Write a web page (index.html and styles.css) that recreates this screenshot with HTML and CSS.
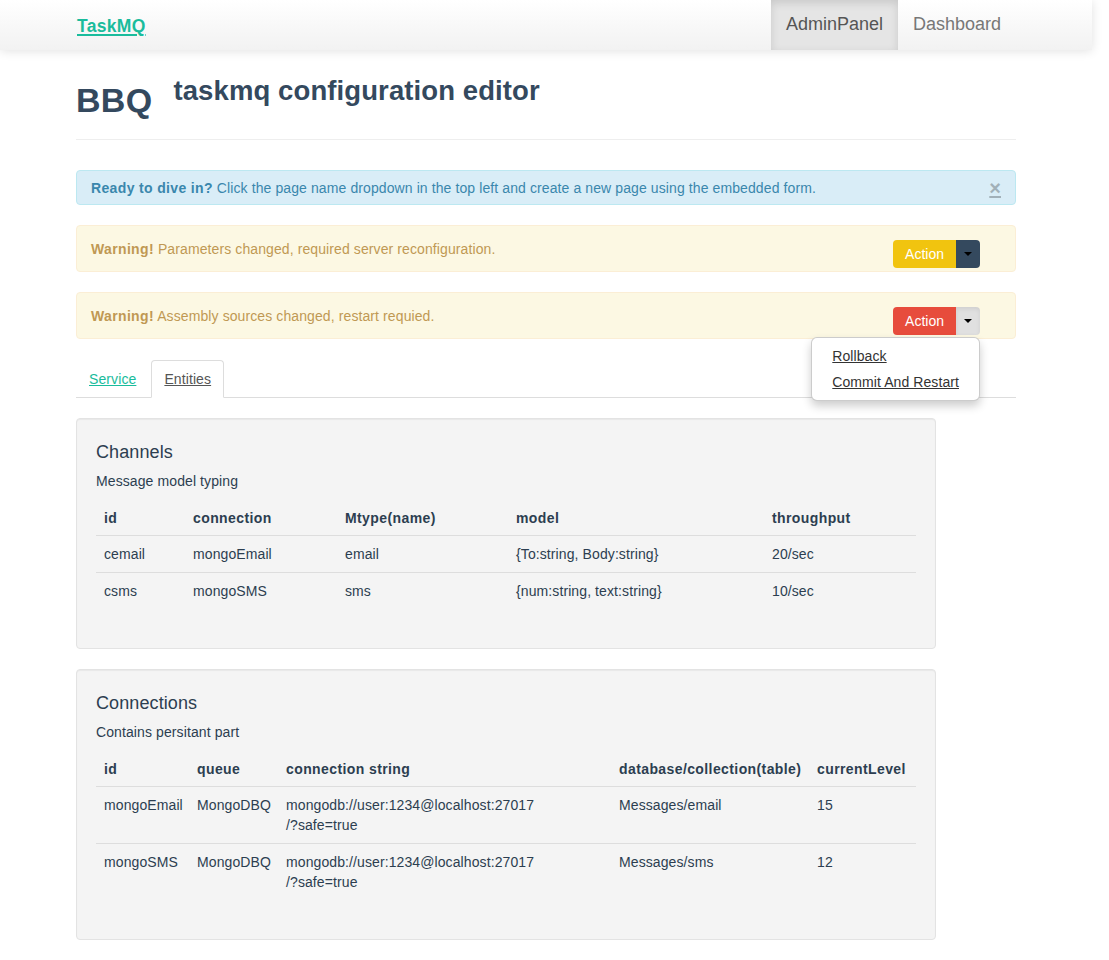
FILE: index.html
```html
<!DOCTYPE html>
<html lang="en">
<head>
<meta charset="utf-8">
<title>TaskMQ - AdminPanel</title>
<link rel="stylesheet" href="styles.css">
</head>
<body>
<div class="page">
  <header class="navbar">
    <div class="container navbar-inner">
      <a class="brand" href="#">TaskMQ</a>
      <ul class="nav">
        <li class="nav-item active"><a class="nav-link" href="#">AdminPanel</a></li>
        <li class="nav-item"><a class="nav-link" href="#">Dashboard</a></li>
      </ul>
    </div>
  </header>

  <main class="container">
    <div class="page-header">
      <h1 class="title-main">BBQ</h1>
      <h2 class="title-sub">taskmq configuration editor</h2>
    </div>

    <div class="alert alert-info">
      <a class="close" href="#">×</a>
      <strong>Ready to dive in?</strong> Click the page name dropdown in the top left and create a new page using the embedded form.
    </div>

    <div class="alert alert-warning">
      <div class="btn-group">
        <button class="btn btn-main btn-yellow">Action</button>
        <button class="btn btn-caret btn-dark"><span class="caret"></span></button>
      </div>
      <strong>Warning!</strong> Parameters changed, required server reconfiguration.
    </div>

    <div class="alert alert-warning">
      <div class="btn-group open">
        <button class="btn btn-main btn-red">Action</button>
        <button class="btn btn-caret btn-light"><span class="caret"></span></button>
        <ul class="dropdown-menu">
          <li><a class="dropdown-link" href="#">Rollback</a></li>
          <li><a class="dropdown-link" href="#">Commit And Restart</a></li>
        </ul>
      </div>
      <strong>Warning!</strong> Assembly sources changed, restart requied.
    </div>

    <ul class="nav-tabs">
      <li class="tab"><a class="tab-link" href="#">Service</a></li>
      <li class="tab active"><a class="tab-link" href="#">Entities</a></li>
    </ul>

    <section class="well">
      <h4 class="well-title">Channels</h4>
      <p class="well-desc">Message model typing</p>
      <table class="table">
        <colgroup>
          <col class="c-ch-id"><col class="c-ch-conn"><col class="c-ch-type"><col class="c-ch-model"><col class="c-ch-thr">
        </colgroup>
        <thead>
          <tr><th>id</th><th>connection</th><th>Mtype(name)</th><th>model</th><th>throughput</th></tr>
        </thead>
        <tbody>
          <tr><td>cemail</td><td>mongoEmail</td><td>email</td><td>{To:string, Body:string}</td><td>20/sec</td></tr>
          <tr><td>csms</td><td>mongoSMS</td><td>sms</td><td>{num:string, text:string}</td><td>10/sec</td></tr>
        </tbody>
      </table>
    </section>

    <section class="well">
      <h4 class="well-title">Connections</h4>
      <p class="well-desc">Contains persitant part</p>
      <table class="table">
        <colgroup>
          <col class="c-cn-id"><col class="c-cn-queue"><col class="c-cn-str"><col class="c-cn-db"><col class="c-cn-lvl">
        </colgroup>
        <thead>
          <tr><th>id</th><th>queue</th><th>connection string</th><th>database/collection(table)</th><th>currentLevel</th></tr>
        </thead>
        <tbody>
          <tr><td>mongoEmail</td><td>MongoDBQ</td><td>mongodb://user:1234@localhost:27017<br>/?safe=true</td><td>Messages/email</td><td>15</td></tr>
          <tr><td>mongoSMS</td><td>MongoDBQ</td><td>mongodb://user:1234@localhost:27017<br>/?safe=true</td><td>Messages/sms</td><td>12</td></tr>
        </tbody>
      </table>
    </section>
  </main>
</div>
</body>
</html>
```

FILE: styles.css
```css
* { box-sizing: border-box; }

html, body {
  margin: 0;
  padding: 0;
  background: #fff;
}

body {
  font-family: "Liberation Sans", Arial, sans-serif;
  font-size: 14px;
  line-height: 20px;
  color: #2c3e50;
  letter-spacing: 0.1px;
}

strong {
  letter-spacing: 0.35px;
}

.page {
  width: 1092px;
}

.container {
  width: 940px;
  margin: 0 auto;
}

/* Navbar */
.navbar {
  height: 50px;
  background: linear-gradient(to bottom, #ffffff 0%, #f2f2f2 100%);
  box-shadow: 0 1px 10px rgba(0, 0, 0, 0.12);
  position: relative;
  z-index: 2;
}

.navbar-inner {
  display: flex;
  justify-content: space-between;
  align-items: stretch;
  height: 50px;
}

.brand {
  font-size: 17.5px;
  font-weight: bold;
  line-height: 48px;
  padding-top: 2px;
  padding-left: 1px;
  letter-spacing: 0.3px;
  color: #1abc9c;
  text-decoration: underline;
  text-decoration-thickness: 2px;
  text-underline-offset: 2px;
}

.nav {
  list-style: none;
  margin: 0;
  padding: 0;
  display: flex;
}

.nav-link {
  display: block;
  height: 50px;
  padding: 0 15px 1px;
  line-height: 49px;
  font-size: 18px;
  letter-spacing: 0;
  color: #777;
  text-decoration: none;
}

.nav-item.active .nav-link {
  background: #e5e5e5;
  color: #555;
  box-shadow: inset 0 3px 8px rgba(0, 0, 0, 0.125);
}

/* Header */
.page-header {
  display: flex;
  align-items: flex-start;
  padding-bottom: 19px;
  border-bottom: 1px solid #eee;
  margin-bottom: 30px;
}

.title-main {
  margin: 30px 0 0 0;
  font-size: 34px;
  line-height: 40px;
  font-weight: bold;
  letter-spacing: 0.3px;
  color: #34495e;
}

.title-sub {
  margin: 21px 0 0 21px;
  font-size: 27.5px;
  line-height: 40px;
  font-weight: bold;
  letter-spacing: 0.1px;
  color: #34495e;
}

/* Alerts */
.alert {
  border: 1px solid;
  border-radius: 4px;
  margin-bottom: 20px;
}

.alert-info {
  padding: 7px 35px 6px 14px;
  background: #d9edf7;
  border-color: #bce8f1;
  color: #3a87ad;
}

.alert-warning {
  padding: 13px 35px 12px 14px;
  background: #fcf8e3;
  border-color: #fbeed5;
  color: #c09853;
}

.close {
  float: right;
  position: relative;
  top: 0;
  right: -21px;
  font-size: 20px;
  font-weight: bold;
  line-height: 20px;
  letter-spacing: 0;
  color: #000;
  opacity: 0.25;
  text-decoration: underline;
}

/* Buttons */
.btn-group {
  float: right;
  margin-top: 1px;
  display: flex;
  position: relative;
}

.btn {
  font-family: inherit;
  font-size: 14px;
  line-height: 20px;
  letter-spacing: 0;
  border: 0;
  margin: 0;
  height: 28px;
  color: #fff;
  cursor: pointer;
}

.btn-main {
  padding: 4px 12px;
  border-radius: 4px 0 0 4px;
}

.btn-caret {
  padding: 4px 8px;
  border-radius: 0 4px 4px 0;
  display: flex;
  align-items: center;
}

.btn-yellow { background: #f1c40f; }
.btn-red { background: #e74c3c; }
.btn-dark { background: #34495e; }
.btn-light {
  background: #e0e0e0;
  box-shadow: inset 0 2px 4px rgba(0, 0, 0, 0.08);
}

.caret {
  display: inline-block;
  width: 0;
  height: 0;
  border-top: 4px solid #000;
  border-left: 4px solid transparent;
  border-right: 4px solid transparent;
}

.dropdown-menu {
  position: absolute;
  top: 100%;
  right: 0;
  margin: 2px 0 0;
  padding: 5px 0;
  list-style: none;
  min-width: 160px;
  background: #fff;
  border: 1px solid rgba(0, 0, 0, 0.2);
  border-radius: 6px;
  box-shadow: 0 5px 10px rgba(0, 0, 0, 0.2);
  z-index: 10;
  white-space: nowrap;
}

.dropdown-link {
  display: block;
  padding: 3px 20px;
  line-height: 20px;
  letter-spacing: 0.08px;
  color: #333;
  text-decoration: underline;
}

/* Tabs */
.nav-tabs {
  list-style: none;
  margin: 0 0 20px;
  padding: 1px 0 0;
  display: flex;
  border-bottom: 1px solid #ddd;
}

.tab {
  margin-bottom: -1px;
  margin-right: 2px;
}

.tab-link {
  display: block;
  padding: 8px 12px;
  line-height: 20px;
  border: 1px solid transparent;
  border-radius: 4px 4px 0 0;
  color: #1abc9c;
  text-decoration: underline;
}

.tab.active .tab-link {
  color: #555;
  background: #fff;
  border-color: #ddd #ddd transparent;
}

/* Wells */
.well {
  width: 860px;
  padding: 19px;
  margin-bottom: 20px;
  background: #f4f4f4;
  border: 1px solid #e3e3e3;
  border-radius: 4px;
  box-shadow: inset 0 1px 1px rgba(0, 0, 0, 0.05);
}

.well-title {
  margin: 4px 0 9px;
  font-size: 18px;
  line-height: 20px;
  font-weight: normal;
  letter-spacing: 0.1px;
  color: #2c3e50;
}

.well-desc {
  margin: 0 0 8px;
}

.table {
  width: 100%;
  table-layout: fixed;
  border-collapse: separate;
  border-spacing: 0;
  margin-bottom: 20px;
}

.table th,
.table td {
  padding: 8px;
  line-height: 20px;
  text-align: left;
  vertical-align: top;
}

.table th {
  font-weight: bold;
  letter-spacing: 0.4px;
  padding-top: 9px;
  padding-bottom: 7px;
}

.table td {
  border-top: 1px solid #ddd;
}

.c-ch-id { width: 89px; }
.c-ch-conn { width: 152px; }
.c-ch-type { width: 171px; }
.c-ch-model { width: 256px; }
.c-ch-thr { width: 152px; }

.c-cn-id { width: 93px; }
.c-cn-queue { width: 89px; }
.c-cn-str { width: 333px; }
.c-cn-db { width: 198px; }
.c-cn-lvl { width: 107px; }
```
